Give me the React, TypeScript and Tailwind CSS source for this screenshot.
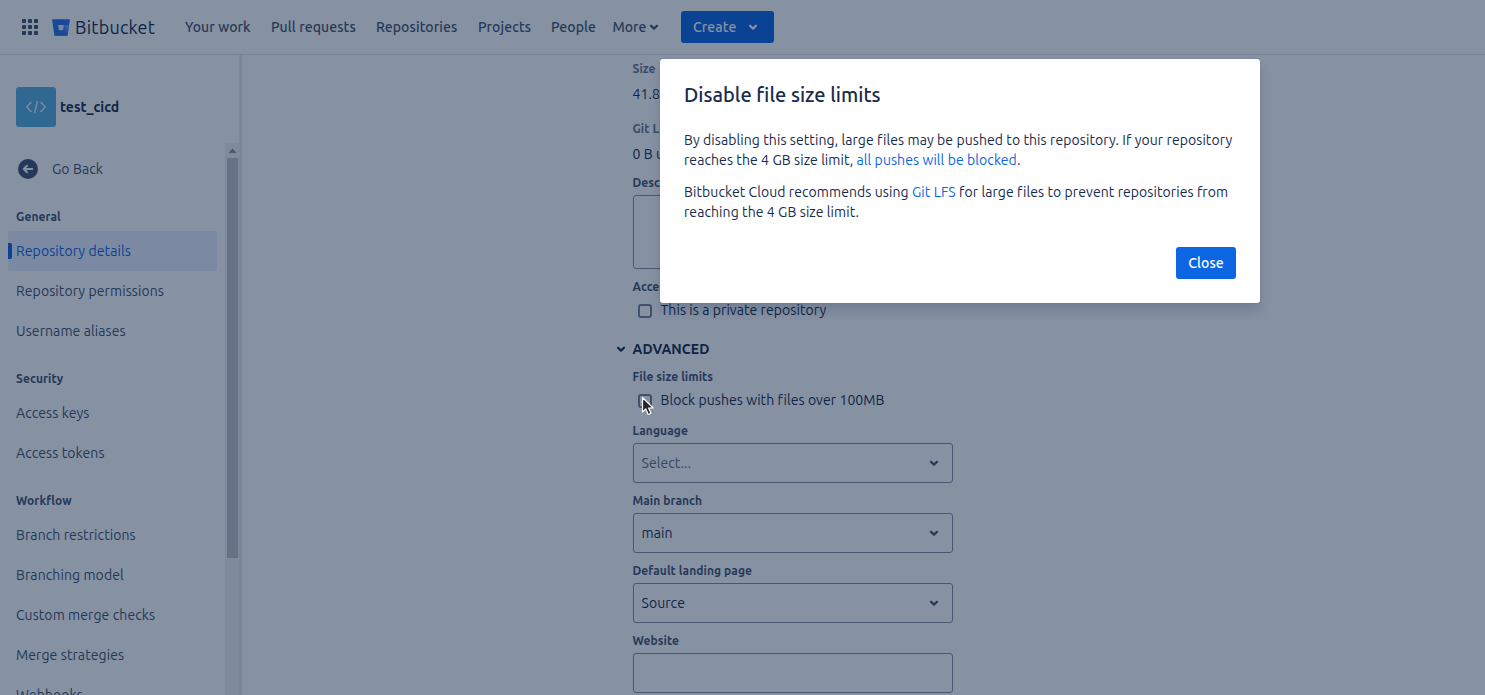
import React from "react";

const navItems = [
  { label: "Your work", style: "w-[66px]" },
  { label: "Pull requests", style: "w-[85px]" },
  { label: "Repositories", style: "w-[82px]" },
  { label: "Projects", style: "w-[53px]" },
  { label: "People", style: "w-[45px]" },
];

const sections = [
  { title: "General", items: ["Repository details", "Repository permissions", "Username aliases"] },
  { title: "Security", items: ["Access keys", "Access tokens"] },
  {
    title: "Workflow",
    items: ["Branch restrictions", "Branching model", "Custom merge checks", "Merge strategies", "Webhooks"],
  },
];

function Chevron({ className = "" }: { className?: string }) {
  return (
    <svg viewBox="0 0 10 8" className={`h-2 w-2.5 shrink-0 ${className}`} fill="none" stroke="currentColor" strokeWidth="2.2" strokeLinecap="round" strokeLinejoin="round">
      <path d="M2 2.700 5 5.600l3-2.900" />
    </svg>
  );
}

function BitbucketMark() {
  return (
    <svg viewBox="0 0 18 17" className="h-[17px] w-[18px]">
      <defs>
        <linearGradient id="bucket" x1="17" y1="5" x2="8" y2="13" gradientUnits="userSpaceOnUse">
          <stop offset="0.1" stopColor="#78a8fb" />
          <stop offset="0.75" stopColor="#2a70ee" />
        </linearGradient>
      </defs>
      <path fill="#2a70ee" d="M.6.3a.5.5 0 0 0-.5.6l2.200 15c.1.500.4.800.9.800h11.700c.3 0 .5-.2.6-.500L17.900.9a.5.5 0 0 0-.5-.6Z" />
      <path fill="url(#bucket)" d="M17.100 5.900h-5.200l-1 5.100H7l-4.500 5.300c.2.200.4.400.7.400h11.700c.3 0 .5-.2.6-.500Z" />
      <path fill="#e3ecfb" d="M6.100 5.900h5.800L11 11.200H7Z" />
    </svg>
  );
}

function Header() {
  return (
    <header className="flex h-[55px] shrink-0 items-center border-b border-[#dcdfe6] pl-[22px] text-sm font-medium tracking-[0.1px] text-[#44546f]">
      <svg viewBox="0 0 16 16" className="h-4 w-4" fill="currentColor">
        {[0, 6, 12].map((y) => [0, 6, 12].map((x) => <rect key={`${x}-${y}`} x={x} y={y} width="4" height="4" rx="0.8" />))}
      </svg>
      <div className="ml-[14px] flex items-center gap-[5px]">
        <BitbucketMark />
        <span className="w-[80px] text-[18px] leading-6 font-normal tracking-[0.25px] whitespace-nowrap text-[#172b4d]">Bitbucket</span>
      </div>
      <nav className="ml-[29.900px] flex items-center gap-5 whitespace-nowrap">
        {navItems.map((item) => (
          <a key={item.label} className={item.style}>{item.label}</a>
        ))}
      </nav>
      <div className="ml-[16.600px] flex items-center gap-[3px]">
        <span className="w-[34px] tracking-normal">More</span>
        <Chevron />
      </div>
      <button className="ml-[21.500px] flex h-8 w-[93px] items-center rounded-[3px] bg-[#0c66e4] pl-3 font-medium text-white">
        <span className="w-[55px] text-left">Create</span>
        <Chevron />
      </button>
    </header>
  );
}

function Sidebar() {
  return (
    <aside className="relative flex w-[242px] shrink-0 flex-col border-r-[3px] border-[#ebecf0] text-sm tracking-[0.09px] text-[#42526e]">
      <div className="mt-8 ml-4 flex h-10 shrink-0 items-center gap-1">
        <div className="flex h-10 w-10 items-center justify-center rounded-[3px] bg-[#55b0df]">
          <svg viewBox="0 0 22 14" className="h-[14px] w-[22px]" fill="none" stroke="#d9edf7" strokeWidth="1.500">
            <path d="M6.500 2 1.600 7l4.900 5M15.500 2l4.900 5-4.900 5M12.500 1 9.500 13" />
          </svg>
        </div>
        <span className="font-bold tracking-normal text-[#172b4d]">test_cicd</span>
      </div>
      <div className="mt-4 flex min-h-0 flex-1">
        <div className="min-w-0 flex-1 overflow-hidden px-2">
          <div className="mt-[6px] flex h-10 items-center gap-[14px] pl-[10px]">
            <svg viewBox="0 0 20 20" className="h-5 w-5">
              <circle cx="10" cy="10" r="10" fill="#42526e" />
              <path d="M14.200 10H6.500M9 6.700 5.800 10 9 13.300" fill="none" stroke="#fff" strokeWidth="2" strokeLinecap="round" strokeLinejoin="round" />
            </svg>
            <span>Go Back</span>
          </div>
          <div className="mt-5">
            {sections.map((section) => (
              <section key={section.title} className="mb-5">
                <h3 className="mb-[6px] pl-2 text-xs leading-4 font-bold">{section.title}</h3>
                {section.items.map((item) =>
                  item === "Repository details" ? (
                    <a key={item} className="relative flex h-10 w-[209px] items-center rounded-[3px] bg-[#e9f2ff] pl-2 text-[#0c66e4]">
                      <span className="absolute top-3 left-0 h-4 w-1 rounded-r-[2px] bg-[#0c66e4]" />
                      {item}
                    </a>
                  ) : (
                    <a key={item} className="flex h-10 items-center pl-2">{item}</a>
                  ),
                )}
              </section>
            ))}
          </div>
        </div>
        <div className="flex w-[14px] flex-col items-center bg-[#f1f2f4]">
          <svg viewBox="0 0 14 15" className="h-[15px] w-[14px]">
            <path d="M3.500 10h8L7.500 5.500Z" fill="#8c8f94" />
          </svg>
          <div className="ml-px h-[400px] w-[11px] bg-[#c1c4c8]" />
        </div>
      </div>
    </aside>
  );
}

function Label({ children, muted = false }: { children: React.ReactNode; muted?: boolean }) {
  return <div className={`pt-px text-xs leading-4 font-bold ${muted ? "text-[#6b778c]" : "text-[#44546f]"}`}>{children}</div>;
}

function CheckRow({ children }: { children: React.ReactNode }) {
  return (
    <div className="mt-[5px] flex h-5 items-center gap-[9px] pl-[5px] leading-5">
      <span className="mt-[2px] h-[14px] w-[14px] rounded-[3px] border-2 border-[#738496]" />
      <span>{children}</span>
    </div>
  );
}

function SelectField({ label, value, placeholder = false }: { label: string; value: string; placeholder?: boolean }) {
  return (
    <div className="mb-[9px]">
      <Label>{label}</Label>
      <div className="mt-1 flex h-10 items-center justify-between rounded-[3px] border border-[#8590a2] pr-[13px] pl-2">
        <span className={placeholder ? "text-[#626f86]" : ""}>{value}</span>
        <Chevron className="text-[#44546f]" />
      </div>
    </div>
  );
}

function RepositoryForm() {
  return (
    <main className="min-w-0 flex-1 overflow-hidden pt-[5px] pl-[390.500px] text-sm tracking-[0.07px] text-[#172b4d]">
      <div className="w-[320px]">
        <Label muted>Size</Label>
        <div className="mt-[7px] leading-5">41.8 KB</div>
        <div className="mt-4"><Label muted>Git LFS</Label></div>
        <div className="mt-[7px] leading-5">0 B used</div>
        <div className="mt-[10px]"><Label>Description</Label></div>
        <div className="mt-1 h-[74px] rounded-[3px] border border-[#8590a2]" />
        <div className="mt-[9px]"><Label>Access level</Label></div>
        <CheckRow>This is a private repository</CheckRow>
        <div className="mt-[19px] -ml-[17px] flex h-5 items-center gap-[7px] font-bold">
          <Chevron />
          <span>ADVANCED</span>
        </div>
        <div className="mt-[9px]"><Label>File size limits</Label></div>
        <CheckRow>Block pushes with files over 100MB</CheckRow>
        <div className="h-3" />
        <SelectField label="Language" value="Select..." placeholder />
        <SelectField label="Main branch" value="main" />
        <SelectField label="Default landing page" value="Source" />
        <Label>Website</Label>
        <div className="mt-1 h-10 rounded-[3px] border border-[#8590a2]" />
      </div>
    </main>
  );
}

function LimitsDialog() {
  return (
    <div className="absolute top-[59px] left-[660px] flex h-[244px] w-[600px] flex-col rounded-[3px] bg-white px-6 text-sm tracking-[0.08px] text-[#172b4d] shadow-[0_8px_12px_rgba(9,30,66,0.15),0_0_1px_rgba(9,30,66,0.31)]">
      <h2 className="mt-6 text-xl leading-6 font-medium tracking-normal">Disable file size limits</h2>
      <p className="mt-[23px] leading-5 whitespace-nowrap">
        By disabling this setting, large files may be pushed to this repository. If your repository
        <br />
        reaches the 4 GB size limit, <a className="text-[#0c66e4]">all pushes will be blocked</a>.
      </p>
      <p className="mt-3 leading-5 whitespace-nowrap">
        Bitbucket Cloud recommends using <a className="text-[#0c66e4]">Git LFS</a> for large files to prevent repositories from
        <br />
        reaching the 4 GB size limit.
      </p>
      <button className="mt-[25px] h-8 w-[60px] self-end rounded-[3px] bg-[#0c66e4] font-medium text-white">Close</button>
    </div>
  );
}

export default function App() {
  return (
    <div className="relative flex h-[695px] w-full flex-col overflow-hidden bg-white font-['Ubuntu','Noto_Sans',sans-serif]">
      <Header />
      <div className="flex min-h-0 flex-1">
        <Sidebar />
        <RepositoryForm />
      </div>
      <div className="absolute inset-0 bg-[#091e42]/49" />
      <LimitsDialog />
      <svg viewBox="0 0 14 21" className="absolute top-[396px] left-[641px] h-[21px] w-[14px]">
        <path d="M1.500 1.500v14.500l3.300-3.100 2.400 5.600 2.800-1.200-2.400-5.300h4.600Z" fill="#262626" stroke="#fff" strokeWidth="1.200" strokeLinejoin="round" />
      </svg>
    </div>
  );
}
